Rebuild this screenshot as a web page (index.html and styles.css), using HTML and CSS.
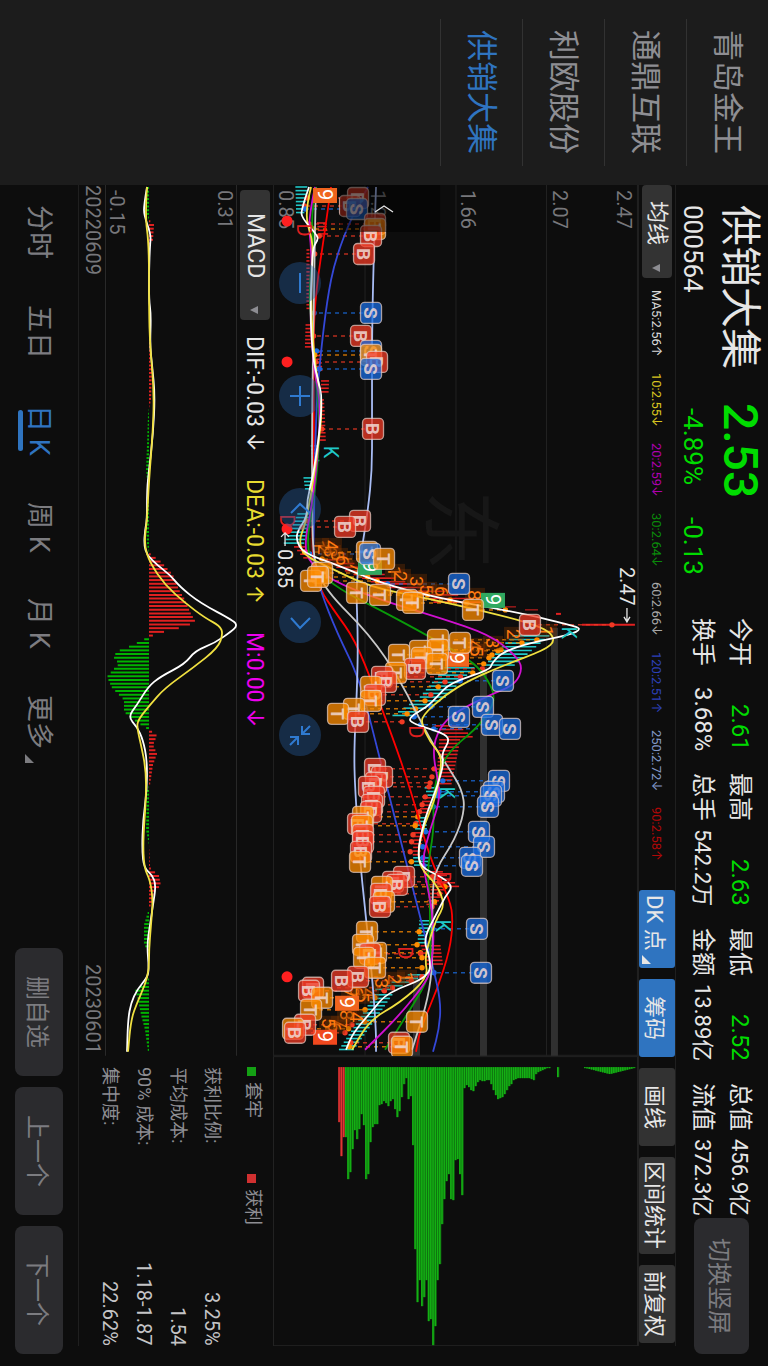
FILE: index.html
```html
<!DOCTYPE html>
<html lang="zh-CN">

<head>
  <meta charset="UTF-8">
  <title>供销大集 000564</title>
  <link rel="stylesheet" href="styles.css">
</head>

<body>
  <div class="app">
    <nav class="watchlist">
      <a href="#">青岛金王</a>
      <a href="#">通鼎互联</a>
      <a href="#">利欧股份</a>
      <a href="#" class="active">供销大集</a>
    </nav>

    <main class="main">
      <header class="quote">
        <div class="stock">
          <h1 class="stock-name">供销大集</h1>
          <p class="stock-code">000564</p>
        </div>
        <div class="price">
          <p class="price-now">2.53</p>
          <p class="price-change"><span>-4.89%</span><span>-0.13</span></p>
        </div>
        <div class="stats">
          <div class="stat"><span>今开</span><span class="value down">2.61</span></div>
          <div class="stat"><span>最高</span><span class="value down">2.63</span></div>
          <div class="stat"><span>最低</span><span class="value down">2.52</span></div>
          <div class="stat"><span>总值</span><span class="value small">456.9亿</span></div>
          <div class="stat"><span>换手</span><span class="value">3.68%</span></div>
          <div class="stat"><span>总手</span><span class="value small">542.2万</span></div>
          <div class="stat"><span>金额</span><span class="value small">13.89亿</span></div>
          <div class="stat"><span>流值</span><span class="value small">372.3亿</span></div>
        </div>
        <button class="btn btn-rotate">切换竖屏</button>
      </header>

      <div class="toolbar">
        <div class="picker picker-ma">
          <select aria-label="主图指标"><option>均线</option></select>
          <i class="caret"></i>
        </div>
        <div class="ma-list">
          <span class="ma5">MA5:2.56↑</span>
          <span class="ma10">10:2.55↓</span>
          <span class="ma20">20:2.59↓</span>
          <span class="ma30">30:2.64↓</span>
          <span class="ma60">60:2.66↓</span>
          <span class="ma120">120:2.51↑</span>
          <span class="ma250">250:2.72↓</span>
          <span class="ma90">90:2.58↑</span>
        </div>
        <div class="tools">
          <button class="tool tool-dk on">DK 点<i class="corner"></i></button>
          <button class="tool on">筹码</button>
          <button class="tool">画线</button>
          <button class="tool tool-wide">区间统计</button>
          <button class="tool">前复权</button>
        </div>
      </div>

      <div class="panels">
        <section class="charts">
          <div class="price-chart">
            <svg id="priceChart" viewBox="273 185 365 871"></svg>
            <div class="zoom-controls">
              <button aria-label="缩小"><svg viewBox="0 0 42 42"><path d="M21 11V31"/></svg></button>
              <button aria-label="放大"><svg viewBox="0 0 42 42"><path d="M21 11V31M11 21H31"/></svg></button>
              <button aria-label="左移"><svg viewBox="0 0 42 42"><path d="M12 25L21 16L31 25"/></svg></button>
              <button aria-label="右移"><svg viewBox="0 0 42 42"><path d="M12 17L21 27L31 17"/></svg></button>
              <button aria-label="收起"><svg viewBox="0 0 42 42"><path d="M31 12L23 20M23 12V20H31M11 31L19 23M11 23H19V31"/></svg></button>
            </div>
          </div>
          <div class="macd-bar">
            <div class="picker picker-macd">
              <select aria-label="副图指标"><option>MACD</option></select>
              <i class="caret"></i>
            </div>
            <span class="dif">DIF:-0.03 ↓</span>
            <span class="dea">DEA:-0.03 ↑</span>
            <span class="hist">M:0.00 ↓</span>
          </div>
          <div class="macd-chart">
            <svg id="macdChart" viewBox="105 185 132 871"></svg>
          </div>
          <div class="dates"><span>20220609</span><span>20230601</span></div>
        </section>

        <section class="chips">
          <div class="chip-chart">
            <svg id="chipChart" viewBox="273 1056 365 290"></svg>
          </div>
          <div class="chip-info">
            <div class="legend">
              <span class="locked">套牢</span>
              <span class="profit">获利</span>
            </div>
            <table class="chip-table">
              <tr><th>获利比例:</th><td>3.25%</td></tr>
              <tr><th>平均成本:</th><td>1.54</td></tr>
              <tr><th>90% 成本:</th><td>1.18-1.87</td></tr>
              <tr><th>集中度:</th><td>22.62%</td></tr>
            </table>
          </div>
        </section>
      </div>

      <footer class="footer">
        <nav class="periods">
          <a href="#">分时</a>
          <a href="#">五日</a>
          <a href="#" class="active">日 K</a>
          <a href="#">周 K</a>
          <a href="#">月 K</a>
          <a href="#">更多<i class="corner"></i></a>
        </nav>
        <div class="actions">
          <button class="btn">删自选</button>
          <button class="btn">上一个</button>
          <button class="btn">下一个</button>
        </div>
      </footer>
    </main>
  </div>

  <script src="charts.js"></script>
</body>

</html>
```

FILE: styles.css
```css
* {
  box-sizing: border-box;
  margin: 0;
  padding: 0;
}

html,
body {
  width: 100%;
  height: 100%;
}

/* the whole screen reads sideways: inline axis runs down, lines stack right to left */
body {
  writing-mode: vertical-rl;
  text-orientation: sideways;
  background: #0d0d0d;
  color: #e6e6e6;
  font-family: Roboto, Inter, "Noto Sans CJK SC", sans-serif;
  font-weight: 400;
  overflow: hidden;
}

a {
  color: inherit;
  text-decoration: none;
}

button,
select {
  writing-mode: inherit;
  text-orientation: inherit;
  font: inherit;
  color: inherit;
  border: none;
  background: none;
  cursor: pointer;
}

span,
a,
button {
  white-space: nowrap;
}

.app {
  display: flex;
  width: 100%;
  height: 100%;
}

/* watch list */
.watchlist {
  display: flex;
  flex-direction: column;
  flex: none;
  inline-size: 185px;
  padding-inline: 19px;
  background: #1c1c1c;
  color: #8e8e93;
  font-size: 31px;
}

.watchlist a {
  block-size: 82px;
  line-height: 82px;
  padding-inline-start: 11px;
  border-block-end: 1px solid #323232;
}

.watchlist .active {
  color: #2f74c0;
}

.main {
  display: flex;
  flex-direction: column;
  flex: 1;
  min-inline-size: 0;
}

/* quote header */
.quote {
  display: flex;
  flex: none;
  align-items: flex-start;
  block-size: 92px;
  padding-block-start: 3px;
  padding-inline: 20px 12px;
}

.stock {
  inline-size: 198px;
}

.stock-name {
  font-size: 41px;
  font-weight: 400;
  line-height: 50px;
}

.stock-code {
  margin-block-start: 5px;
  font-size: 26px;
  line-height: 34px;
}

.price {
  inline-size: 215px;
  color: #00dc00;
}

.price-now {
  font-size: 48px;
  font-weight: 500;
  line-height: 50px;
}

.price-change {
  display: flex;
  gap: 32px;
  margin-block-start: 5px;
  padding-inline-start: 5px;
  font-size: 26px;
  line-height: 34px;
}

.stats {
  display: grid;
  grid-template-columns: repeat(4, 133px);
  column-gap: 22px;
  padding-block-start: 7px;
  font-size: 24px;
  line-height: 37px;
}

.stat {
  display: flex;
  justify-content: space-between;
}

.small {
  font-size: 22px;
}

.down {
  color: #00dc00;
}

.btn {
  block-size: 48px;
  inline-size: 128px;
  border-radius: 8px;
  background: #2b2b2e;
  color: #7c7c80;
  font-size: 24px;
}

.btn-rotate {
  block-size: 55px;
  inline-size: 136px;
  margin-block-start: 16px;
  margin-inline-start: auto;
}

/* indicator toolbar */
.toolbar {
  display: flex;
  flex: none;
  align-items: center;
  block-size: 38px;
  margin-inline-end: 20px;
  border-block: 1px solid #1f1f1f;
}

.picker {
  position: relative;
  block-size: 30px;
  border-radius: 4px;
  background: #333333;
}

.picker select {
  appearance: none;
  block-size: 100%;
  inline-size: 100%;
  font-size: 22px;
  line-height: 30px;
}

.picker-ma {
  inline-size: 93px;
}

.picker-ma select {
  padding-inline-start: 16px;
}

.picker-macd {
  inline-size: 130px;
}

.picker-macd select {
  padding-inline-start: 23px;
  font-size: 23px;
}

.caret {
  position: absolute;
  inset-block-start: 12px;
  inset-inline-end: 6px;
  border-block-start: 8px solid #8d8d92;
  border-inline: 4px solid transparent;
}

.ma-list {
  display: flex;
  gap: 16px;
  padding-inline-start: 12px;
  font-size: 13px;
}

.ma5 { color: #d8d8d8; }
.ma10 { color: #d8c420; }
.ma20 { color: #b000b0; }
.ma30 { color: #0a8a0a; }
.ma60 { color: #a8a8a8; }
.ma120 { color: #2c40b8; }
.ma250 { color: #8298c8; }
.ma90 { color: #b00808; }

.tools {
  display: flex;
  gap: 11px;
  margin-inline-start: auto;
  padding-inline-end: 3px;
}

.tool {
  position: relative;
  block-size: 36px;
  inline-size: 78px;
  border-radius: 3px;
  background: #323232;
  font-size: 22px;
}

.tool-dk {
  padding-inline-end: 12px;
}

.tool-wide {
  inline-size: 97px;
}

.on {
  background: #2f74c0;
}

.corner {
  border-block-end: 9px solid currentColor;
  border-inline-start: 9px solid transparent;
}

.tool .corner {
  position: absolute;
  inset-block-end: 3px;
  inset-inline-end: 4px;
}

/* charts */
.panels {
  display: flex;
  flex: 1;
  min-block-size: 0;
  margin-inline-end: 20px;
  border-block-end: 1px solid #1f1f1f;
}

.charts,
.chips {
  display: flex;
  flex-direction: column;
  min-inline-size: 0;
}

.charts {
  flex: 3;
}

.chips {
  flex: 1;
}

.price-chart,
.chip-chart {
  position: relative;
  flex: 1;
  min-block-size: 0;
}

.price-chart > svg,
.macd-chart > svg,
.chip-chart > svg {
  display: block;
  width: 100%;
  height: 100%;
  writing-mode: horizontal-tb;
}

.zoom-controls {
  position: absolute;
  inset-block-end: 6px;
  inset-inline-start: 77px;
  display: flex;
  gap: 71px;
}

.zoom-controls button {
  inline-size: 42px;
  block-size: 42px;
  border-radius: 50%;
  background: rgba(37, 92, 158, 0.4);
}

.zoom-controls svg {
  display: block;
  width: 42px;
  height: 42px;
  fill: none;
  stroke: #2f7ad0;
  stroke-width: 2;
}

.macd-bar {
  display: flex;
  flex: none;
  align-items: center;
  block-size: 36px;
  padding-inline-start: 5px;
  font-size: 23px;
}

.dif {
  inline-size: 143px;
  margin-inline-start: 16px;
}

.dea {
  inline-size: 153px;
  color: #e8dc30;
}

.hist {
  color: #ee00ee;
}

.macd-chart {
  flex: none;
  block-size: 132px;
}

.dates {
  display: flex;
  flex: none;
  justify-content: space-between;
  block-size: 26px;
  padding-inline-end: 2px;
  color: #77777b;
  font-size: 20px;
  line-height: 25px;
}

.chip-info {
  flex: none;
  block-size: 194px;
  padding-block-start: 3px;
  padding-inline-start: 11px;
  color: #8e8e93;
  font-size: 18px;
}

.legend {
  display: flex;
  line-height: 34px;
}

.legend span {
  inline-size: 107px;
}

.legend span::before {
  content: "";
  display: inline-block;
  inline-size: 9px;
  block-size: 9px;
  margin-inline-end: 6px;
  background: #14a014;
}

.legend .profit::before {
  background: #d03030;
}

.chip-table {
  inline-size: 100%;
  margin-block-start: 7px;
  border-spacing: 0;
  line-height: 34px;
}

.chip-table th {
  text-align: start;
  font-weight: 400;
}

.chip-table td {
  text-align: end;
  color: #c4c4c6;
  font-size: 20px;
}

/* bottom bar */
.footer {
  display: flex;
  flex: none;
  align-items: center;
  justify-content: space-between;
  block-size: 78px;
  padding-inline: 20px 12px;
}

.periods {
  display: flex;
  gap: 46px;
  color: #7c7c80;
  font-size: 27px;
  line-height: 60px;
}

.periods a {
  position: relative;
}

.periods .active {
  color: #2f74c0;
}

.periods .active::after {
  content: "";
  position: absolute;
  inset-block-end: 9px;
  inset-inline: 5px;
  block-size: 5px;
  border-radius: 3px;
  background: #2f74c0;
}

.periods .corner {
  position: absolute;
  inset-block-end: 16px;
  inset-inline-end: -14px;
}

.actions {
  display: flex;
  gap: 11px;
}

/* chart text */
.axis {
  fill: #77777b;
  font-size: 20px;
}

.callout {
  fill: #e6e6e6;
  font-size: 20px;
}

.watermark {
  fill: #171717;
  font-size: 80px;
  font-weight: 400;
}

.count {
  fill: #ff7a10;
  font-size: 19px;
}

.nine {
  fill: #ffffff;
  font-size: 20px;
}

.flag {
  fill: #f0d8d4;
  fill-opacity: 0.85;
  font-size: 19px;
  font-weight: 700;
  text-anchor: middle;
}

.dk {
  font-size: 20px;
  text-anchor: middle;
}
```

FILE: charts.js
```js
const RED = '#e02020';
const CYAN = '#20c8c8';

// moving averages, [x, y] pairs
const lines = [
  ['#ff0000', '331,187 325,230 316,290 313,340 314,430 313,500 312,560 320,590 335,612 355,640 375,690 408,780 430,860 450,900 453,920 450,950 437,990 420,1030 416,1052'],
  ['#3448d8', '368,187 353,213 335,260 327,300 320,360 317,397 315,450 314,520 313,560 320,590 337,633 360,680 380,760 403,850 420,917 433,967 441,1003 439,1030 433,1052'],
  ['#a8bcf4', '376,187 372,300 372,427 372,470 368,510 360,560 356,585 358,640 357,690 354,750 355,790 360,860 365,910 372,975 376,1030 376,1052'],
  ['#c8c8c8', '316,187 315,220 314,300 312,400 312,500 313,560 325,590 370,635 400,680 430,740 450,770 462,790 465,810 455,840 435,870 432,900 433,960 428,1000 412,1050'],
  ['#0a9a0a', '316,187 311,215 314,240 309,290 311,320 315,370 319,410 319,450 315,490 310,520 307,545 312,567 340,590 380,610 430,637 470,660 485,675 495,695 491,710 475,730 450,750 437,775 433,800 434,830 427,870 430,900 430,940 431,975 410,1010 385,1050'],
  ['#d010d0', '315,187 308,220 311,245 312,280 310,320 314,370 320,400 319,440 315,480 311,510 305,540 307,560 330,580 380,600 440,618 490,635 515,655 523,668 515,685 490,695 450,715 436,735 433,755 438,780 440,800 430,830 422,860 427,885 432,910 434,940 431,965 428,980 400,1015 365,1050'],
  ['#f0e040', '311,187 304,215 313,240 312,270 311,313 315,365 319,385 322,410 319,440 314,475 310,500 305,525 299,540 303,555 330,568 370,587 420,597 500,615 545,628 556,640 545,650 505,665 470,680 445,695 422,716 422,725 430,742 441,755 441,770 435,800 424,825 418,850 420,868 437,885 445,905 436,920 428,945 425,960 428,978 400,1003 370,1020 352,1050'],
  ['#ffffff', '309,187 301,210 302,218 317,235 318,240 313,247 312,267 310,313 313,360 318,380 322,397 320,427 316,457 312,480 307,500 307,517 298,530 296,540 303,553 337,565 380,583 437,598 520,613 570,625 582,629 570,635 530,643 503,652 492,663 490,670 450,683 437,697 427,707 410,717 410,723 443,733 450,740 442,753 443,763 442,770 437,787 427,813 422,830 418,850 420,867 443,878 453,887 445,897 437,913 423,940 430,957 430,977 387,993 373,1010 353,1033 346,1050']
];

// candle runs: [first y, last y, low, high at start, low, high at end, colour]
const candles = [
  [187, 215, 297, 309, 296, 304, CYAN],
  [223, 236, 315, 324, 316, 326, RED],
  [250, 312, 307, 310, 306, 310, RED],
  [325, 350, 306, 311, 306, 312, RED],
  [352, 372, 312, 319, 314, 321, RED],
  [381, 395, 320, 328, 320, 328, RED],
  [400, 441, 319, 323, 319, 325, RED],
  [446, 464, 312, 318, 314, 321, CYAN],
  [478, 492, 301, 312, 304, 309, CYAN],
  [514, 545, 296, 308, 284, 305, CYAN],
  [547, 558, 294, 306, 304, 316, RED],
  [560, 583, 320, 345, 370, 405, RED],
  [584, 603, 375, 420, 440, 490, RED],
  [636, 666, 508, 545, 485, 515, CYAN],
  [668, 698, 452, 482, 424, 450, CYAN],
  [701, 719, 420, 446, 390, 408, CYAN],
  [726, 738, 432, 456, 445, 470, RED],
  [740, 784, 434, 455, 434, 450, RED],
  [788, 796, 421, 436, 424, 440, CYAN],
  [798, 816, 424, 432, 420, 430, RED],
  [818, 831, 413, 424, 412, 424, CYAN],
  [833, 856, 412, 422, 411, 418, RED],
  [858, 868, 410, 426, 412, 426, CYAN],
  [872, 888, 425, 445, 440, 465, RED],
  [890, 908, 434, 448, 428, 438, RED],
  [921, 944, 417, 427, 416, 424, CYAN],
  [946, 966, 422, 442, 430, 446, RED],
  [975, 992, 412, 430, 375, 395, CYAN],
  [995, 1052, 370, 388, 337, 352, CYAN]
];

// trade marks: letter, x, y (and the end of the leader where it is not on the line)
const marks = [
  ['B', 358, 198], ['B', 350, 206], ['S', 357, 209], ['B', 375, 224], ['T', 375, 229], ['B', 371, 236],
  ['B', 364, 254], ['S', 371, 313], ['B', 361, 336], ['S', 371, 351], ['T', 371, 355], ['B', 377, 362],
  ['S', 371, 369], ['B', 373, 429], ['B', 360, 521], ['B', 345, 527], ['T', 367, 552], ['S', 370, 554],
  ['T', 384, 559], ['T', 322, 573], ['T', 311, 581], ['T', 318, 577], ['S', 459, 584], ['T', 357, 593],
  ['T', 380, 595], ['T', 407, 600], ['T', 413, 603], ['T', 473, 610], ['B', 530, 625, 612], ['T', 438, 640],
  ['T', 460, 643], ['T', 420, 651], ['T', 399, 655], ['T', 438, 650], ['T', 422, 658], ['T', 437, 664],
  ['B', 415, 669], ['T', 396, 673], ['B', 382, 677], ['B', 386, 682], ['T', 371, 687], ['B', 375, 695],
  ['T', 371, 701], ['T', 354, 709], ['T', 338, 714], ['B', 358, 722], ['S', 503, 681], ['S', 483, 707],
  ['S', 459, 717], ['S', 492, 725], ['S', 510, 729], ['B', 375, 769], ['B', 382, 777], ['B', 376, 783],
  ['B', 369, 787], ['B', 374, 797], ['B', 372, 805], ['B', 371, 812], ['T', 363, 817], ['B', 358, 824],
  ['T', 362, 826], ['B', 363, 835], ['B', 363, 842], ['B', 361, 852], ['T', 360, 862], ['B', 404, 877],
  ['B', 393, 882], ['B', 397, 885], ['T', 382, 887], ['B', 381, 894], ['T', 384, 902], ['B', 380, 907],
  ['T', 367, 932], ['T', 363, 945], ['T', 376, 953], ['B', 370, 954], ['T', 364, 958], ['T', 375, 968],
  ['B', 358, 977], ['B', 342, 981], ['B', 313, 988], ['B', 309, 991], ['T', 322, 998], ['T', 311, 1010],
  ['B', 305, 1025], ['T', 293, 1029], ['B', 295, 1033], ['T', 417, 1022], ['B', 399, 1043], ['T', 402, 1047],
  ['S', 499, 781], ['S', 494, 792], ['S', 491, 796], ['S', 488, 807], ['S', 479, 832], ['S', 484, 847],
  ['S', 470, 858], ['S', 472, 866], ['S', 477, 929], ['S', 481, 973]
];
const markColor = { B: '#f03a24', S: '#1a6ce0', T: '#ff8c00' };

// nine-turn counts
const counts = [
  [1, 312, 540], [2, 318, 544], [3, 324, 547], [4, 325, 540], [5, 331, 550], [6, 336, 555], [7, 350, 562],
  [1, 388, 566], [2, 394, 571], [3, 410, 576], [5, 420, 584], [6, 435, 586], [8, 468, 590],
  [1, 540, 626], [2, 507, 629], [3, 486, 638], [4, 468, 640], [5, 470, 646],
  [1, 400, 972], [2, 388, 974], [3, 375, 978], [4, 362, 988], [5, 356, 992], [6, 350, 986], [7, 344, 988],
  [8, 340, 1010], [7, 334, 1018], [6, 328, 1022], [5, 322, 1018], [4, 350, 1012]
];
const nines = [
  [325, 195, '#f0641e'], [370, 567, '#30a860'], [493, 600, '#30a860'],
  [457, 659, '#f0641e'], [347, 1003, '#f0641e'], [325, 1037, '#f0481e']
];
const dk = [
  ['K', 331, 452], ['K', 569, 633], ['K', 447, 793], ['K', 443, 926],
  ['D', 304, 230], ['D', 287, 521], ['D', 416, 732], ['D', 405, 953], ['D', 443, 878]
];

function text(cls, x, y, value, fill) {
  const color = fill ? ` fill="${fill}"` : '';
  return `<text class="${cls}"${color} transform="translate(${x} ${y}) rotate(90)">${value}</text>`;
}

function line(x1, y1, x2, y2, color, extra = '') {
  return `<line x1="${x1}" y1="${y1}" x2="${x2}" y2="${y2}" stroke="${color}" ${extra}/>`;
}

function curve(points, color) {
  // midpoints joined by quadratic segments keep the averages smooth
  const p = points.split(' ').map(s => s.split(',').map(Number));
  let d = `M${p[0]}`;
  for (let i = 1; i < p.length - 1; i++) {
    d += `Q${p[i]} ${(p[i][0] + p[i + 1][0]) / 2},${(p[i][1] + p[i + 1][1]) / 2}`;
  }
  d += `L${p[p.length - 1]}`;
  return `<path d="${d}" fill="none" stroke="${color}" stroke-width="1.8"/>`;
}

function valueAt(pairs, y) {
  for (let i = 1; i < pairs.length; i++) {
    if (y <= pairs[i][0]) {
      const [y0, v0] = pairs[i - 1];
      const [y1, v1] = pairs[i];
      return v0 + (v1 - v0) * (y - y0) / (y1 - y0);
    }
  }
  return pairs[pairs.length - 1][1];
}

function drawPrice() {
  let out = '';
  [273.5, 365, 456, 546.5, 637.5].forEach(x => {
    out += line(x, 185, x, 1056, '#222222');
  });
  out += line(273, 1055.5, 638, 1055.5, '#222222');
  out += text('watermark', 432, 490, '东');
  out += '<rect x="480" y="667" width="7" height="389" fill="#303030"/>';
  out += '<rect x="551" y="628" width="7" height="428" fill="#303030"/>';
  out += '<rect x="413" y="975" width="7" height="81" fill="#303030"/>';

  [[617, '2.47'], [553, '2.07'], [461, '1.66'], [371, '1.26'], [279, '0.85']].forEach(([x, v]) => {
    out += text('axis', x, 190, v);
  });

  candles.forEach(([y0, y1, a0, b0, a1, b1, color]) => {
    for (let y = y0; y <= y1; y += 3.65) {
      const t = (y - y0) / (y1 - y0);
      const low = a0 + (a1 - a0) * t;
      const high = b0 + (b1 - b0) * t;
      const shift = Math.sin(y * 1.7) * (high - low) * 0.25;
      out += line(low + shift, y, high + shift, y, color, 'stroke-width="1.6"');
    }
  });
  out += line(582, 625, 635, 625, RED, 'stroke-width="2"');
  out += line(500, 607, 516, 607, RED) + line(525, 610, 538, 610, RED) + line(556, 614, 561, 614, RED, 'stroke-width="2"');

  const ma5 = lines[7][1].split(' ').map(s => s.split(',').map(Number).reverse());
  marks.forEach(([type, x, y, end]) => {
    const tip = end || valueAt(ma5, y) + (type === 'S' ? 4 : x < valueAt(ma5, y) && y > 630 ? -8 : 2);
    out += line(x, y, tip, y, markColor[type], 'stroke-dasharray="4 4" stroke-opacity="0.75" stroke-width="1.5"');
    out += `<circle cx="${tip}" cy="${y}" r="2.7" fill="${markColor[type]}"/>`;
  });

  counts.forEach(([n, x, y]) => {
    out += `<rect x="${x - 3}" y="${y - 2}" width="20" height="14" fill="#7a3400" fill-opacity="0.35"/>`;
    out += text('count', x, y, n);
  });

  lines.forEach(([color, points]) => {
    out += curve(points, color);
  });

  nines.forEach(([x, y, color]) => {
    out += `<rect x="${x - 12}" y="${y - 7}" width="24" height="15" fill="${color}"/>`;
    out += text('nine', x - 7, y - 6, 9);
  });
  marks.forEach(([type, x, y]) => {
    out += `<rect x="${x - 10.5}" y="${y - 10.5}" width="21" height="21" rx="4" fill="${markColor[type]}" fill-opacity="0.75" stroke="#e8d0c8" stroke-opacity="0.7" stroke-width="1.3"/>`;
    out += text('flag', x - 7, y, type);
  });
  dk.forEach(([letter, x, y]) => {
    out += text('dk', x - 7, y, letter, letter === 'K' ? CYAN : RED);
  });
  [221, 362, 529, 977].forEach(y => {
    out += `<circle cx="287" cy="${y}" r="5.5" fill="#ff2020"/>`;
  });

  out += text('callout', 620, 567, '2.47');
  out += '<path d="M627 608V621M624 617L627 622L630 617" fill="none" stroke="#e6e6e6" stroke-width="1.3"/>';
  out += text('callout', 278, 549, '0.85');
  out += '<path d="M285 546V534M281 537L285 533L289 537" fill="none" stroke="#e6e6e6" stroke-width="1.3"/>';

  // collapse handle
  out += '<rect x="340" y="185" width="100" height="47" fill="#000000" fill-opacity="0.5"/>';
  out += '<path d="M375 212L384 206L393 212" fill="none" stroke="#e6e6e6" stroke-width="1.3"/>';
  document.getElementById('priceChart').innerHTML = out;
}

const dif = '147,187 144,205 144,215 151,235 150,245 149,270 149,300 151,315 150,345 152,365 155,395 153,435 149,470 147,490 147,520 145,530 144,545 147,555 157,565 170,575 180,587 200,603 234,621 237,626 232,631 215,643 195,651 185,664 160,677 148,687 137,705 128,717 137,727 143,740 147,760 147,790 143,820 142,850 144,868 152,875 156,885 153,905 150,925 147,945 149,970 147,978 137,990 131,1003 128,1020 127,1052';
const dea = '147,187 145,215 149,245 149,310 150,345 154,390 153,430 149,480 147,520 144,545 150,563 165,585 185,603 205,618 220,626 223,634 218,648 193,668 165,688 150,705 138,720 137,728 141,745 146,770 146,800 143,840 144,868 150,880 153,900 151,925 149,950 149,970 145,985 137,1003 131,1020 128,1052';
const hist = [
  [187, -2], [215, -2], [220, 0], [225, 5], [240, 4], [245, 0], [360, 1], [370, 3], [400, 2], [408, 0], [415, -1],
  [445, -2], [470, -3], [490, -1], [515, -2], [520, -3], [545, -2], [553, 0], [562, 12], [575, 24], [590, 30],
  [600, 36], [612, 41], [621, 46], [626, 39], [632, 15], [637, 0], [641, -8], [646, -18], [652, -33], [658, -35],
  [664, -30], [670, -36], [677, -42], [688, -37], [700, -25], [712, -25], [718, -18], [727, -5], [731, 2], [736, 8],
  [745, 4], [754, 8], [765, 4], [785, 1], [790, -2], [830, -3], [845, 0], [868, 1], [876, 10], [886, 12], [890, 6],
  [905, 2], [912, -1], [925, -5], [945, -5], [950, -1], [960, 0], [978, 0], [985, -5], [990, -14], [1000, -11],
  [1015, -8], [1030, -4], [1052, -1]
];

function drawMacd() {
  let out = line(105.5, 185, 105.5, 1056, '#2a2a2a') + line(236.5, 185, 236.5, 1056, '#2a2a2a');
  for (let y = 188; y < 1053; y += 3.7) {
    const v = valueAt(hist, y);
    out += line(149, y, 149 + v, y, v > 0 ? RED : '#00b400', 'stroke-width="2"');
  }
  out += curve(dif, '#ffffff') + curve(dea, '#f0e040');
  out += text('axis', 218, 190, '0.31') + text('axis', 110, 190, '-0.15');
  document.getElementById('macdChart').innerHTML = out;
}

const chips = [
  55, 89, 70, 70, 112, 105, 82, 63, 72, 62, 47, 58, 112, 107, 75, 60, 57, 57, 38, 37, 34, 36, 39, 34, 32, 42, 50, 44,
  30, 17, 11, 32, 29, 78, 182, 235, 213, 239, 230, 213, 254, 252, 278, 259, 213, 197, 157, 132, 114, 107, 132, 133,
  93, 92, 107, 128, 21, 18, 20, 23, 24, 19, 15, 13, 14, 14, 13, 13, 17, 23, 28, 32, 31, 30, 27, 23, 19, 17, 13, 12,
  11, 11, 11, 11, 11, 11, 12, 13, 7, 5, 4, 3, 2, 1, 1
];

function drawChips() {
  let out = '<rect x="273.5" y="1056.5" width="364" height="289" fill="none" stroke="#222222"/>';
  function bar(x, len, color, back) {
    out += `<rect x="${x}" y="1067" width="2.3" height="${len}" fill="${back}"/>`;
    out += `<rect x="${x}" y="1067" width="1.5" height="${len}" fill="${color}"/>`;
  }
  chips.forEach((len, i) => {
    const x = 338.3 + i * 2.237;
    if (i < 3) bar(x, len, '#e03434', '#902020');
    else bar(x, len, '#14b014', '#107010');
  });
  bar(557, 10, '#14b014', '#107010');
  for (let x = 584; x < 635; x += 2.237) {
    bar(x, Math.max(1, 7 - Math.abs(x - 609) * 0.25), '#14b014', '#107010');
  }
  document.getElementById('chipChart').innerHTML = out;
}

drawPrice();
drawMacd();
drawChips();
```
